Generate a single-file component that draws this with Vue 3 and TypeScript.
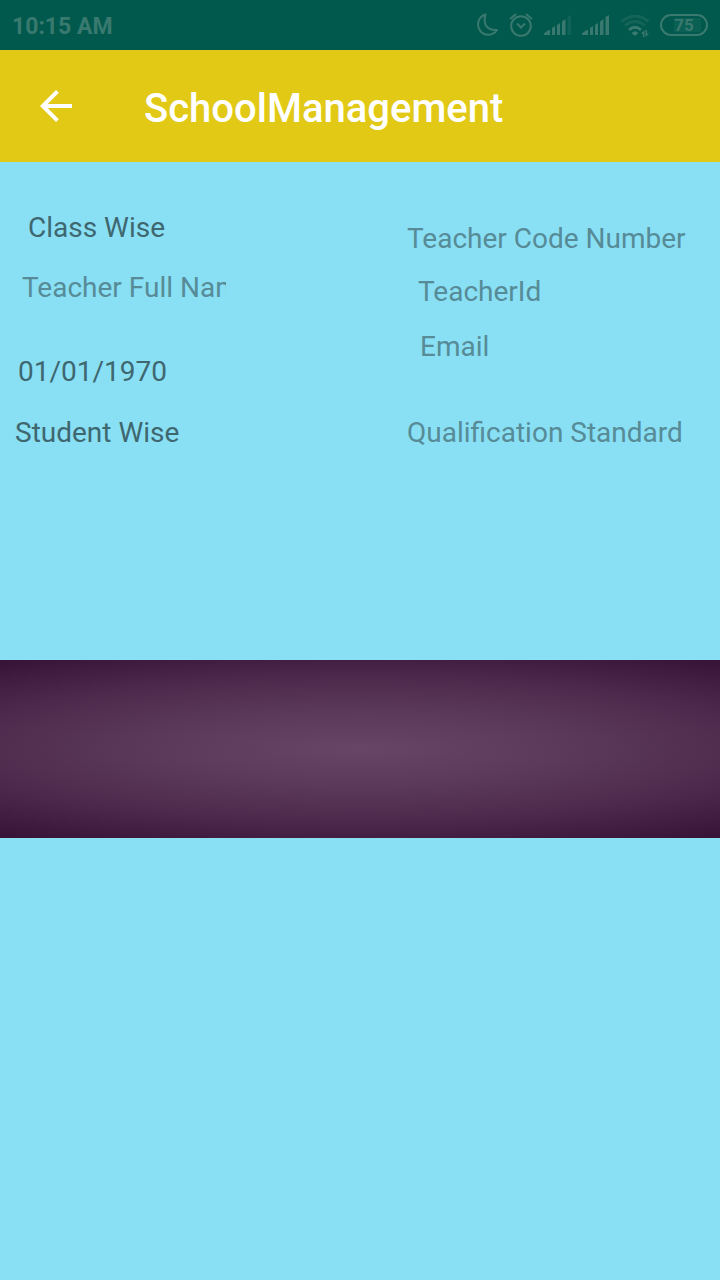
<script setup lang="ts">
import { ref } from 'vue'

const fullName = ref('')
const date = ref('01/01/1970')
const codeNumber = ref('')
const teacherId = ref('')
const email = ref('')
const qualification = ref('')
</script>

<template>
  <div class="screen">
    <div class="status">
      <span class="clock">10:15 AM</span>
      <div class="indicators">
        <svg class="moon" width="24" height="26" viewBox="0 0 24 26" aria-hidden="true">
          <path d="M9.500 2.500A10.300 10.300 0 1 0 21 18Q13 18.500 10 13.500Q7.500 8.500 9.500 2.500Z" fill="none" stroke="currentColor" stroke-width="2" stroke-linejoin="round" />
        </svg>
        <svg class="alarm" width="24" height="26" viewBox="0 0 24 26" aria-hidden="true">
          <g fill="none" stroke="currentColor" stroke-width="2">
            <circle cx="12" cy="14" r="9.800" />
            <path d="M8 11.500L12 15.500L16 11.500M1 7L7 2M17 2L23 7" />
          </g>
        </svg>
        <svg class="signal" width="27" height="26" viewBox="0 0 27 26" aria-hidden="true">
          <path d="M0 23V21.500L4.500 18H6V23ZM8 23V16L11 14V23ZM13 23V13L16 11V23ZM18 23V9.500L21.500 7V23Z" fill="currentColor" />
          <path d="M23.500 23V5L27 3V23Z" fill="currentColor" opacity=".3" />
        </svg>
        <svg class="signal" width="27" height="26" viewBox="0 0 27 26" aria-hidden="true">
          <path d="M0 23V21.500L4.500 18H6V23ZM8 23V16L11 14V23ZM13 23V13L16 11V23ZM18 23V9.500L21.500 7V23ZM23.500 23V5L27 3V23Z" fill="currentColor" />
        </svg>
        <svg class="wifi" width="29" height="26" viewBox="0 0 29 26" aria-hidden="true">
          <g fill="none" stroke="currentColor" stroke-width="3">
            <path d="M1.500 9.500Q15 -1 28.500 9.500M5 13.500Q15 5.500 25 13.500" opacity=".35" />
            <path d="M9 18Q15 12.500 21 18" />
          </g>
          <path d="M11.500 21Q15 17.500 18.500 21L15 24ZM21.500 21L24.500 18V25H23V22H21.500ZM25.500 18H27V21.500H29L25.500 25Z" fill="currentColor" />
        </svg>
        <span class="battery">75</span>
      </div>
    </div>
    <header class="bar">
      <button class="back" type="button" aria-label="Back">
        <svg width="32" height="32" viewBox="0 0 32 32" aria-hidden="true">
          <path d="M32 14V18H7.700L18.800 29.200L16 32L0 16L16 0L18.800 2.800L7.700 14Z" fill="currentColor" />
        </svg>
      </button>
      <h1>SchoolManagement</h1>
    </header>
    <main>
      <form class="form" @submit.prevent>
        <div class="column">
          <span class="label class-wise">Class Wise</span>
          <input v-model="fullName" class="full-name" type="text" placeholder="Teacher Full Name" aria-label="Teacher Full Name" />
          <input v-model="date" class="date" type="text" aria-label="Date" />
          <span class="label student-wise">Student Wise</span>
        </div>
        <div class="column right">
          <input v-model="codeNumber" class="code" type="text" placeholder="Teacher Code Number" aria-label="Teacher Code Number" />
          <input v-model="teacherId" class="teacher-id" type="text" placeholder="TeacherId" aria-label="TeacherId" />
          <input v-model="email" class="email" type="email" placeholder="Email" aria-label="Email" />
          <input v-model="qualification" class="qualification" type="text" placeholder="Qualification Standard" aria-label="Qualification Standard" />
        </div>
      </form>
      <div class="banner"></div>
    </main>
  </div>
</template>

<style>
body {
  margin: 0;
  background: #89e0f4;
}
</style>

<style scoped>
.screen {
  min-height: 100vh;
  background: #89e0f4;
  color: #3f6770;
  font-family: Roboto, sans-serif;
}
.status {
  display: flex;
  align-items: center;
  justify-content: space-between;
  box-sizing: border-box;
  height: 50px;
  padding: 0 12px;
  background: #00594c;
  color: #39796f;
}
.clock {
  padding-top: 4px;
  font-size: 23px;
  line-height: 28px;
  font-weight: 700;
}
.indicators {
  display: flex;
  align-items: center;
  gap: 11px;
}
.indicators svg {
  display: block;
}
.moon {
  margin-right: -2px;
}
.battery {
  box-sizing: border-box;
  width: 48px;
  height: 22px;
  border: 2px solid currentColor;
  border-radius: 11px;
  background: linear-gradient(#096053, #096053) 12px 2px / 27px 14px no-repeat;
  font-size: 17px;
  line-height: 18px;
  font-weight: 700;
  text-align: center;
}
.bar {
  display: flex;
  align-items: center;
  box-sizing: border-box;
  height: 112px;
  padding: 0 40px;
  gap: 72px;
  background: #e1c916;
  color: #fff;
}
.back {
  display: block;
  padding: 0;
  border: 0;
  background: none;
  color: inherit;
}
.back svg {
  display: block;
}
h1 {
  margin: 0;
  padding-top: 6px;
  font-size: 40px;
  line-height: 48px;
  font-weight: 500;
}
.form {
  display: grid;
  grid-template-columns: 5fr 4fr;
  box-sizing: border-box;
  min-height: 498px;
  padding-top: 49px;
}
.column {
  display: flex;
  flex-direction: column;
  align-items: flex-start;
  min-width: 0;
}
.right {
  padding-top: 11px;
}
.label,
input {
  font-size: 28px;
  line-height: 34px;
}
input {
  box-sizing: border-box;
  width: 280px;
  height: 34px;
  padding: 0;
  border: 0;
  outline: 0;
  background: transparent;
  color: inherit;
  font-family: inherit;
}
input::placeholder {
  color: #568b97;
  opacity: 1;
}
.class-wise {
  margin-left: 28px;
}
.full-name {
  width: 204px;
  margin: 26px 0 50px 22px;
}
.date {
  margin-left: 18px;
}
.student-wise {
  margin: 27px 0 0 15px;
}
.code,
.qualification {
  margin-left: 7px;
}
.teacher-id {
  margin: 19px 0 21px 18px;
}
.email {
  margin-left: 20px;
}
.qualification {
  margin-top: 52px;
}
.banner {
  height: 178px;
  background: radial-gradient(ellipse 84% 60% at center, #674567 0%, #5b395b 35%, #4d2a4d 67%, #371438 100%);
}
</style>
